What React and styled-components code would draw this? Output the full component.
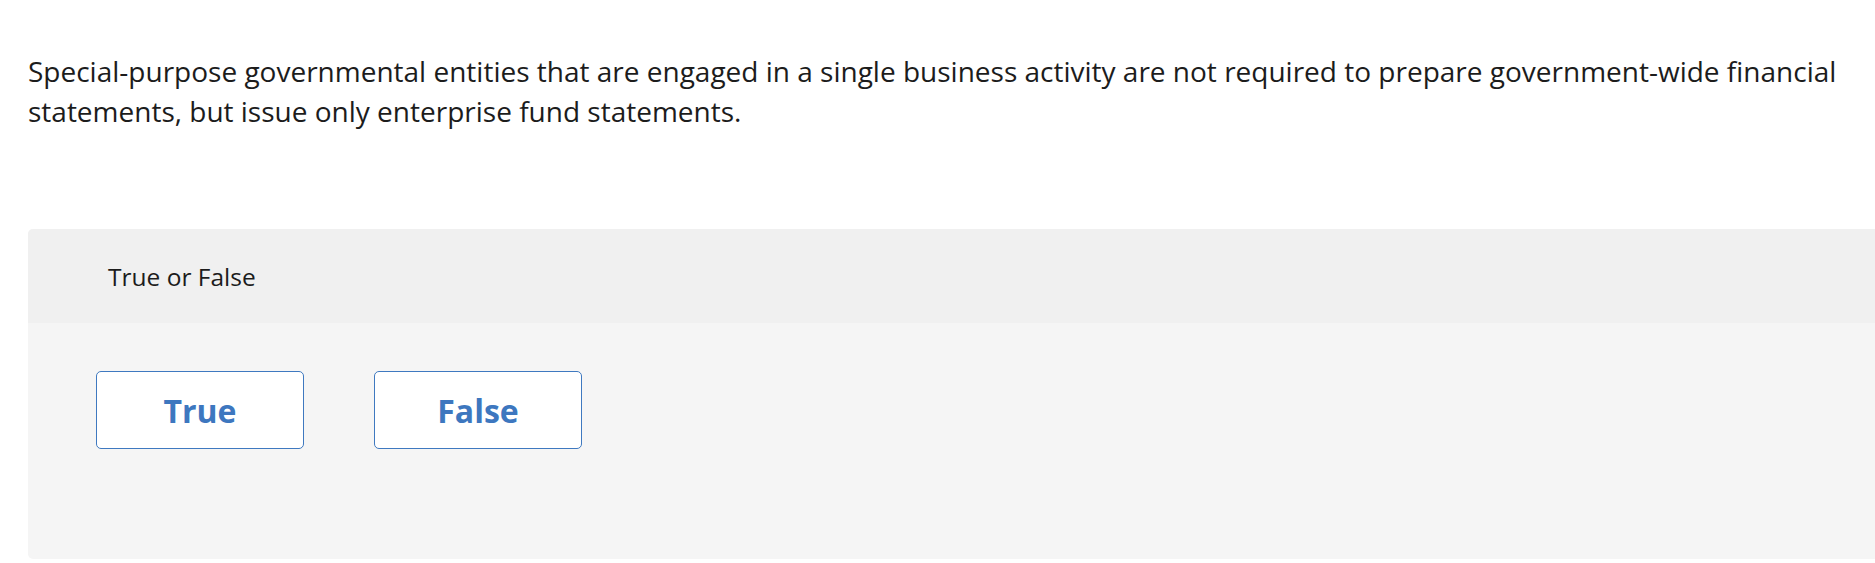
import React from 'react';
import styled, { createGlobalStyle } from 'styled-components';

const GlobalStyle = createGlobalStyle`
  html, body {
    margin: 0;
    padding: 0;
    background: #ffffff;
    overflow: hidden;
  }
  body {
    font-family: "Open Sans", "Liberation Sans", sans-serif;
    color: #1c1c1c;
  }
`

const Page = styled.div`
  width: 1875px;
  height: 563px;
  padding: 51px 0 0 28px;
  box-sizing: border-box;
  display: flex;
  flex-direction: column;
`

const Prompt = styled.p`
  margin: 0;
  width: 1838px;
  font-size: 28px;
  line-height: 40px;
  letter-spacing: 0;
  color: #1c1c1c;
`

const Panel = styled.div`
  margin-top: 98px;
  width: 1860px;
  border-radius: 5px;
  overflow: hidden;
  background: #f5f5f5;
`

const PanelHeader = styled.div`
  height: 94px;
  background: #f0f0f0;
  display: flex;
  align-items: center;
  padding-left: 80px;
  font-size: 24.5px;
  color: #1c1c1c;
`

const Choices = styled.div`
  display: flex;
  gap: 70px;
  padding: 48px 0 110px 68px;
`

const Choice = styled.button`
  width: 208px;
  height: 78px;
  box-sizing: border-box;
  background: #ffffff;
  border: 1px solid #3f79c0;
  border-radius: 5px;
  font-family: "Open Sans", "Liberation Sans", sans-serif;
  font-weight: 700;
  font-size: 32px;
  color: #3d77bf;
  cursor: pointer;
  padding: 0;
`

export default function App() {
  return (
    <>
      <GlobalStyle />
      <Page>
        <Prompt>
          Special-purpose governmental entities that are engaged in a single business activity are not required to prepare government-wide financial statements, but issue only enterprise fund statements.
        </Prompt>
        <Panel>
          <PanelHeader>True or False</PanelHeader>
          <Choices>
            <Choice>True</Choice>
            <Choice>False</Choice>
          </Choices>
        </Panel>
      </Page>
    </>
  );
}
